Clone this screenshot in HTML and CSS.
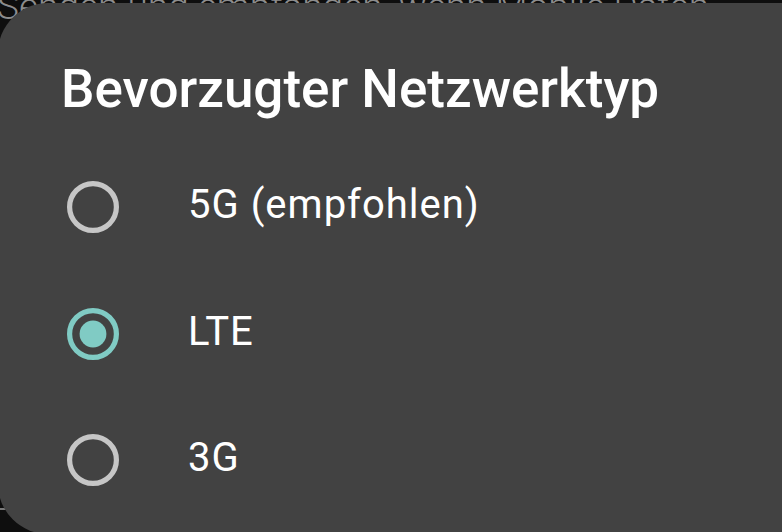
FILE: index.html
```html
<!DOCTYPE html>
<html lang="de">
<head>
<meta charset="utf-8">
<link rel="stylesheet" href="styles.css">
</head>
<body>
<div class="screen">
  <div class="behind">
    <p class="behind-line first">Senden und empfangen, wenn Mobile Daten</p>
    <p class="behind-line">deaktiviert sind</p>
    <div class="behind-rule"></div>
  </div>
  <div class="dialog">
    <h1 class="title">Bevorzugter Netzwerktyp</h1>
    <div class="options">
      <div class="option">
        <svg class="radio" width="52" height="52" viewBox="0 0 52 52"><circle cx="26" cy="26" r="23.4" fill="none" stroke="#c6c6c6" stroke-width="5.2"/></svg>
        <span class="label">5G (empfohlen)</span>
      </div>
      <div class="option">
        <svg class="radio" width="52" height="52" viewBox="0 0 52 52"><circle cx="26" cy="26" r="23.4" fill="none" stroke="#80cbc4" stroke-width="5.2"/><circle cx="26" cy="26" r="13.4" fill="#80cbc4"/></svg>
        <span class="label">LTE</span>
      </div>
      <div class="option">
        <svg class="radio" width="52" height="52" viewBox="0 0 52 52"><circle cx="26" cy="26" r="23.4" fill="none" stroke="#c6c6c6" stroke-width="5.2"/></svg>
        <span class="label">3G</span>
      </div>
    </div>
  </div>
</div>
</body>
</html>
```
FILE: styles.css
```css
html, body {
  margin: 0;
  padding: 0;
  background: #0e0e0e;
  overflow: hidden;
}
.screen {
  position: relative;
  width: 782px;
  height: 532px;
  overflow: hidden;
  font-family: Roboto, "Noto Sans", sans-serif;
}
.behind {
  margin-left: -3px;
  color: #8c8c8c;
}
.behind-line {
  margin: 0;
  font-family: Roboto, sans-serif;
  font-weight: 300;
  font-size: 37px;
  line-height: 38px;
  white-space: nowrap;
}
.behind-line.first {
  margin-top: -12px;
}
.behind-rule {
  margin-top: 444px;
  width: 12px;
  height: 2px;
  background: #7a7a7a;
}
.dialog {
  position: absolute;
  top: 3px;
  left: -2px;
  width: 900px;
  height: 531px;
  box-sizing: border-box;
  background: #424242;
  border-radius: 50px;
  padding: 56px 0 0 63px;
  display: flex;
  flex-direction: column;
}
.title {
  margin: 0;
  color: #ffffff;
  font-weight: 500;
  font-size: 53px;
  line-height: 60px;
  white-space: nowrap;
}
.options {
  margin-top: 25px;
  display: flex;
  flex-direction: column;
}
.option {
  height: 126.5px;
  display: flex;
  align-items: center;
}
.radio {
  margin-left: 6px;
  flex: none;
  display: block;
}
.label {
  margin-left: 69px;
  color: #ffffff;
  font-size: 40px;
  letter-spacing: 1px;
  line-height: 48px;
  padding-bottom: 4px;
  white-space: nowrap;
}
```
